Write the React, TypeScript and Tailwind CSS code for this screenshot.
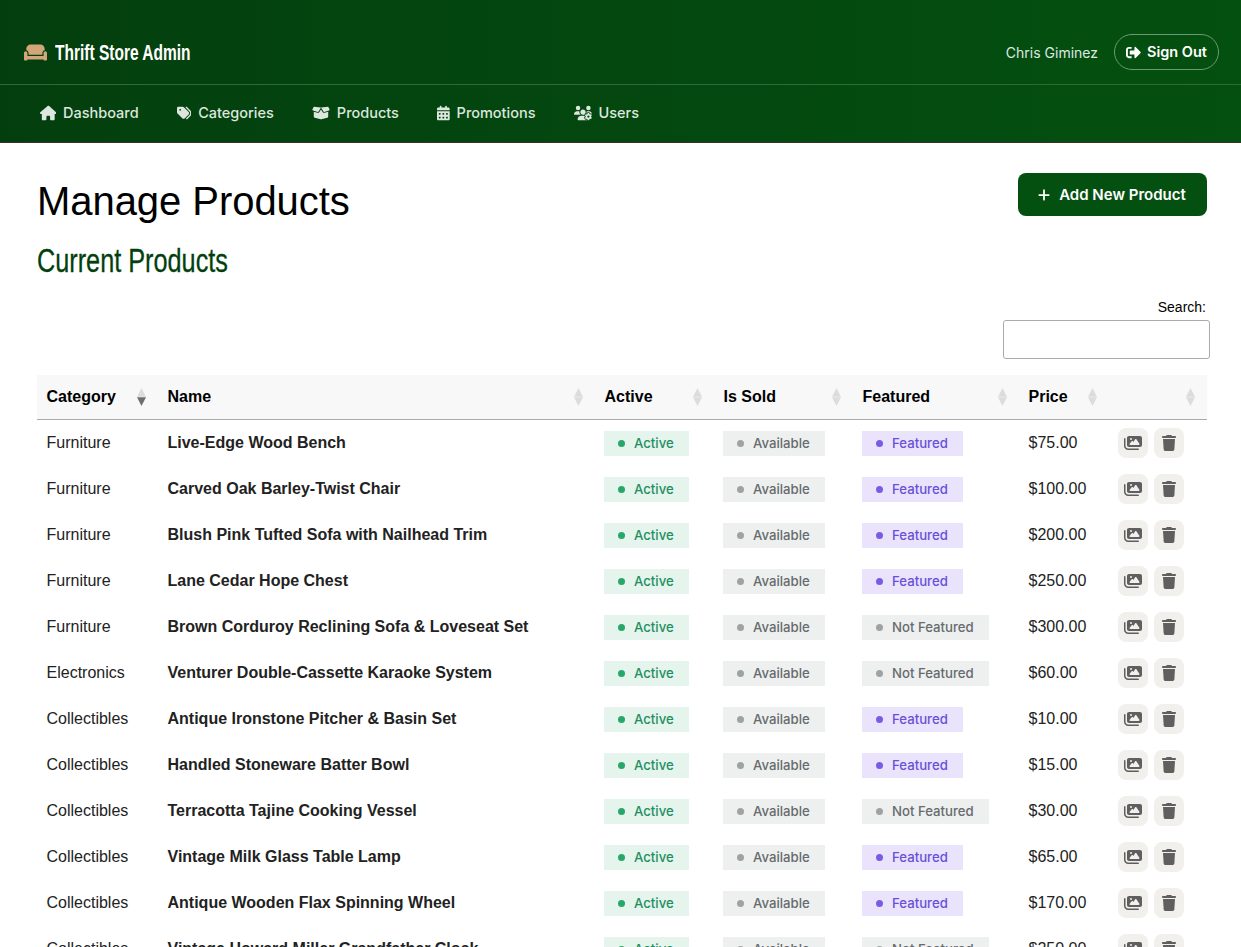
import { FaSignOutAlt } from "react-icons/fa";
import { FaBoxOpen, FaCalendarDays, FaCouch, FaHouse, FaImages, FaPlus, FaTags, FaTrash, FaUsersGear } from "react-icons/fa6";

interface Product {
  category: string;
  name: string;
  featured: boolean;
  price: string;
}

const products: Product[] = [
  { category: "Furniture", name: "Live-Edge Wood Bench", featured: true, price: "$75.00" },
  { category: "Furniture", name: "Carved Oak Barley-Twist Chair", featured: true, price: "$100.00" },
  { category: "Furniture", name: "Blush Pink Tufted Sofa with Nailhead Trim", featured: true, price: "$200.00" },
  { category: "Furniture", name: "Lane Cedar Hope Chest", featured: true, price: "$250.00" },
  { category: "Furniture", name: "Brown Corduroy Reclining Sofa & Loveseat Set", featured: false, price: "$300.00" },
  { category: "Electronics", name: "Venturer Double-Cassette Karaoke System", featured: false, price: "$60.00" },
  { category: "Collectibles", name: "Antique Ironstone Pitcher & Basin Set", featured: true, price: "$10.00" },
  { category: "Collectibles", name: "Handled Stoneware Batter Bowl", featured: true, price: "$15.00" },
  { category: "Collectibles", name: "Terracotta Tajine Cooking Vessel", featured: false, price: "$30.00" },
  { category: "Collectibles", name: "Vintage Milk Glass Table Lamp", featured: true, price: "$65.00" },
  { category: "Collectibles", name: "Antique Wooden Flax Spinning Wheel", featured: true, price: "$170.00" },
  { category: "Collectibles", name: "Vintage Howard Miller Grandfather Clock", featured: false, price: "$250.00" },
];

const navItems = [
  { label: "Dashboard", icon: FaHouse, iconSize: "h-[16px] w-[16.5px]" },
  { label: "Categories", icon: FaTags, iconSize: "h-[16px] w-[14.5px]" },
  { label: "Products", icon: FaBoxOpen, iconSize: "h-[16px] w-[18px]" },
  { label: "Promotions", icon: FaCalendarDays, iconSize: "h-[16px] w-[12.7px]" },
  { label: "Users", icon: FaUsersGear, iconSize: "h-[16px] w-[18px]" },
];

const columns = [
  { label: "Category", width: "w-[121px]" },
  { label: "Name", width: "w-[437px]" },
  { label: "Active", width: "w-[119px]" },
  { label: "Is Sold", width: "w-[139px]" },
  { label: "Featured", width: "w-[166px]" },
  { label: "Price", width: "w-[90px]" },
  { label: "", width: "w-[98px]" },
];

function SortIcon({ active }: { active?: boolean }) {
  return (
    <svg width="9" height="18" viewBox="0 0 9 18" className="absolute right-[12px] top-[13px]">
      <path d="M4.5 0 L9 8.8 H0 Z" fill="#dcdcdc" />
      <path d="M4.5 18 L9 9.2 H0 Z" fill={active ? "#6f6f6f" : "#dcdcdc"} />
    </svg>
  );
}

function Badge({ tone, children }: { tone: "green" | "gray" | "purple"; children: string }) {
  const tones = {
    green: "bg-[#e5f5ee] text-[#1f8f5f]",
    gray: "bg-[#eef0f0] text-[#666b6e]",
    purple: "bg-[#e9e4fb] text-[#6a4fd8]",
  };
  const dots = { green: "bg-[#27a769]", gray: "bg-[#9da3a5]", purple: "bg-[#7a5be6]" };
  return (
    <span className={`inline-flex h-[25px] items-center gap-[9px] pl-[14px] pr-[15px] font-['Inter',sans-serif] text-[13.2px] font-medium ${tones[tone]}`}>
      <span className={`h-[7px] w-[7px] rounded-full ${dots[tone]}`} />
      {children}
    </span>
  );
}

export default function App() {
  return (
    <div className="h-screen overflow-hidden bg-white font-['Liberation_Sans',sans-serif] text-[#222]">
      <header className="border-b border-[#3b2f2a] bg-gradient-to-r from-[#033f0e] to-[#045010]">
        <div className="flex h-[85px] items-center justify-between border-b border-[#2f6a3a] pl-[24px] pr-[22px] pt-[20px]">
          <div className="flex items-center gap-[8px]">
            <FaCouch className="text-[23px] text-[#d2a679]" />
            <span className="inline-block origin-left scale-x-[0.705] text-[22px] font-bold text-white">Thrift Store Admin</span>
          </div>
          <div className="flex items-center gap-[16px] font-['Inter',sans-serif]">
            <span className="text-[14px] text-[#dfe9e0]">Chris Giminez</span>
            <button className="flex h-[36px] items-center gap-[6px] rounded-full border border-[#6d9875] px-[11px] text-[14.5px] font-semibold text-white">
              <FaSignOutAlt className="text-[15px]" />
              Sign Out
            </button>
          </div>
        </div>
        <nav className="flex h-[57px] items-center gap-[38px] pb-[2px] pl-[39.5px] font-['Inter',sans-serif]">
          {navItems.map((item) => (
            <a key={item.label} className="flex items-center gap-[7px] text-[14.5px] font-medium text-[#dde7de]">
              <item.icon className={item.iconSize} />
              {item.label}
            </a>
          ))}
        </nav>
      </header>

      <main className="px-[34px] pt-[30px]">
        <div className="flex items-start justify-between pl-[3px]">
          <h1 className="mt-[4px] text-[40px] leading-[48px] tracking-[-0.05px] text-black">Manage Products</h1>
          <button className="flex h-[43px] w-[189px] items-center justify-center gap-[8px] rounded-[8px] bg-[#045010] pr-[2px] pt-[1px] font-['Inter',sans-serif] text-[15px] font-semibold text-white">
            <FaPlus className="text-[14px]" />
            Add New Product
          </button>
        </div>
        <h2 className="mt-[15px] origin-left scale-x-[0.743] pl-[4px] text-[34px] leading-[40px] text-[#033f0e] [-webkit-text-stroke:0.3px_#033f0e]">Current Products</h2>

        <div className="-mr-[3px] mt-[17px] flex flex-col items-end">
          <label className="pr-[4px] text-[14px] leading-[20px] text-black">Search:</label>
          <input className="mt-[3px] h-[38.5px] w-[207px] rounded-[3px] border border-[#aaa] bg-white" />
        </div>

        <table className="ml-[3px] mt-[16.5px] w-[1170px] table-fixed border-collapse">
          <thead>
            <tr className="h-[44px] border-b border-[#aaa] bg-[#f8f8f8]">
              {columns.map((col, i) => (
                <th key={i} className={`relative pl-[9.5px] pt-[1px] text-left text-[16px] font-bold text-black ${col.width}`}>
                  {col.label}
                  <SortIcon active={i === 0} />
                </th>
              ))}
            </tr>
          </thead>
          <tbody>
            {products.map((p) => (
              <tr key={p.name} className="h-[46px]">
                <td className="pl-[9.5px] pt-[2px] text-[16px]">{p.category}</td>
                <td className="pl-[9.5px] pt-[2px] text-[16px] font-bold">{p.name}</td>
                <td className="pl-[9px] pt-[2px]">
                  <Badge tone="green">Active</Badge>
                </td>
                <td className="pl-[9px] pt-[2px]">
                  <Badge tone="gray">Available</Badge>
                </td>
                <td className="pl-[9px] pt-[2px]">
                  <Badge tone={p.featured ? "purple" : "gray"}>{p.featured ? "Featured" : "Not Featured"}</Badge>
                </td>
                <td className="pl-[9.5px] pt-[2px] text-[16px]">{p.price}</td>
                <td className="pl-[9px] pt-[2px]">
                  <div className="flex gap-[6px]">
                    <span className="flex h-[30px] w-[30px] items-center justify-center rounded-[8px] bg-[#f1f0ec] text-[#5f5f5f]">
                      <FaImages className="text-[18px]" />
                    </span>
                    <span className="flex h-[30px] w-[30px] items-center justify-center rounded-[8px] bg-[#f1f0ec] text-[#5f5f5f]">
                      <FaTrash className="text-[16px]" />
                    </span>
                  </div>
                </td>
              </tr>
            ))}
          </tbody>
        </table>
      </main>
    </div>
  );
}
